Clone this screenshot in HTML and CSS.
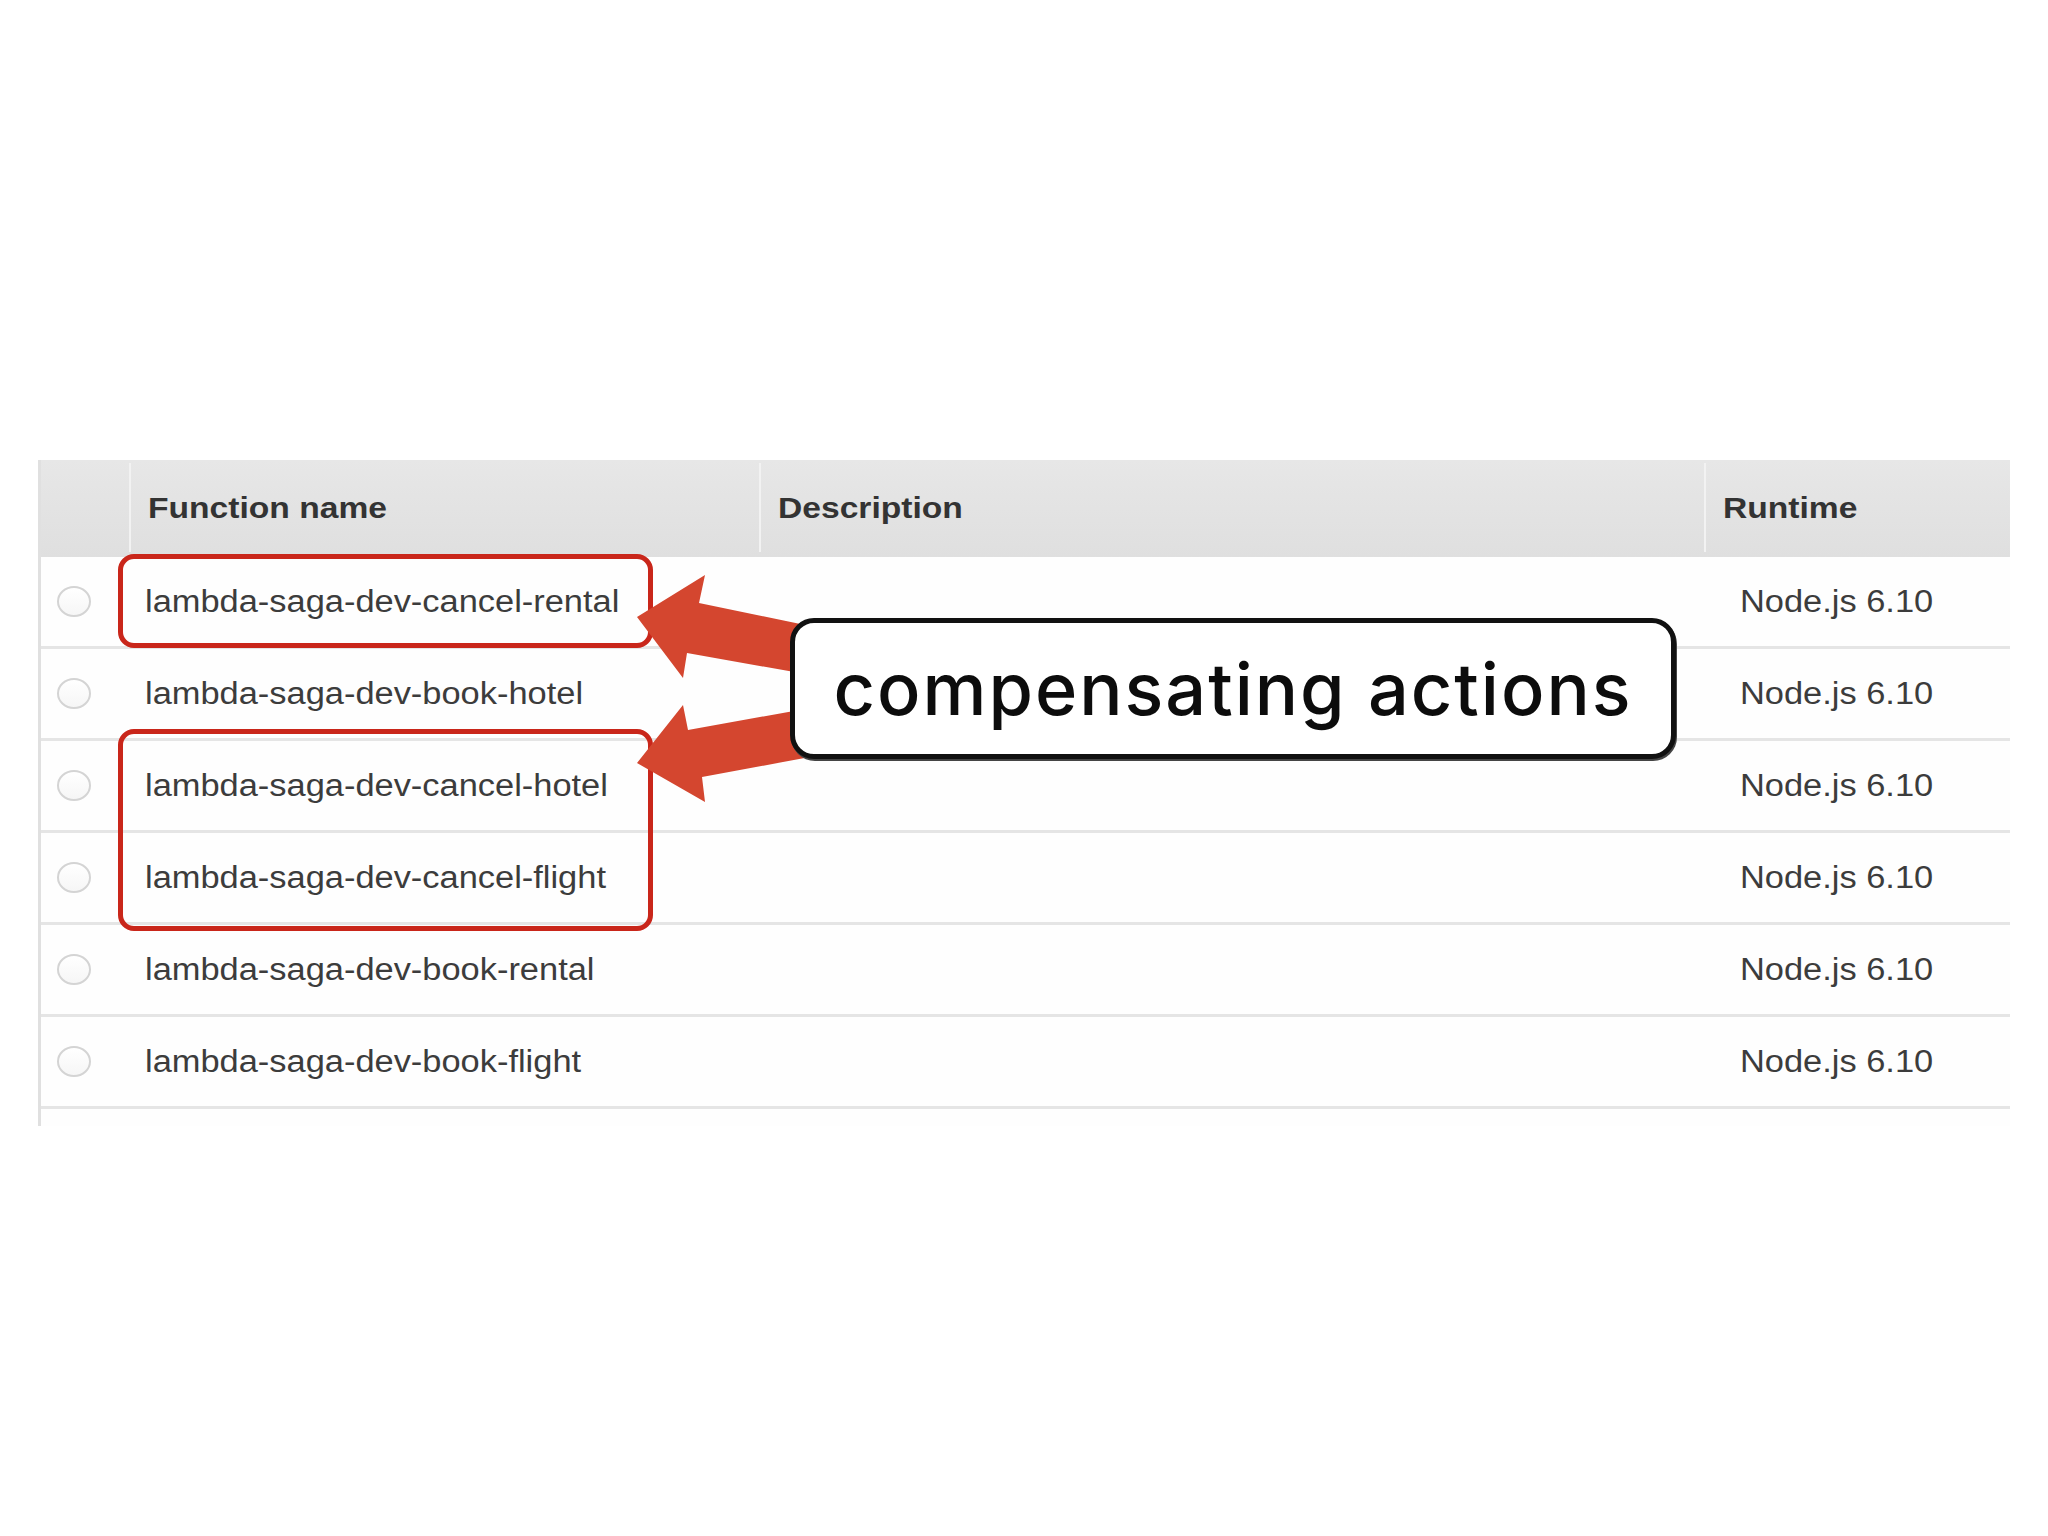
FILE: index.html
```html
<!DOCTYPE html>
<html lang="en">
<head>
<meta charset="utf-8">
<title>compensating actions</title>
<link rel="stylesheet" href="styles.css">
</head>
<body>
<div class="slide">
  <div class="table">
    <div class="thead">
      <div class="th th-check"></div>
      <div class="th"><span class="stretch">Function name</span></div>
      <div class="th"><span class="stretch">Description</span></div>
      <div class="th"><span class="stretch">Runtime</span></div>
    </div>
    <div class="row">
      <div class="cell check"><span class="radio"></span></div>
      <div class="cell name"><span class="stretch">lambda-saga-dev-cancel-rental</span></div>
      <div class="cell desc"></div>
      <div class="cell runtime"><span class="stretch">Node.js 6.10</span></div>
    </div>
    <div class="row">
      <div class="cell check"><span class="radio"></span></div>
      <div class="cell name"><span class="stretch">lambda-saga-dev-book-hotel</span></div>
      <div class="cell desc"></div>
      <div class="cell runtime"><span class="stretch">Node.js 6.10</span></div>
    </div>
    <div class="row">
      <div class="cell check"><span class="radio"></span></div>
      <div class="cell name"><span class="stretch">lambda-saga-dev-cancel-hotel</span></div>
      <div class="cell desc"></div>
      <div class="cell runtime"><span class="stretch">Node.js 6.10</span></div>
    </div>
    <div class="row">
      <div class="cell check"><span class="radio"></span></div>
      <div class="cell name"><span class="stretch">lambda-saga-dev-cancel-flight</span></div>
      <div class="cell desc"></div>
      <div class="cell runtime"><span class="stretch">Node.js 6.10</span></div>
    </div>
    <div class="row">
      <div class="cell check"><span class="radio"></span></div>
      <div class="cell name"><span class="stretch">lambda-saga-dev-book-rental</span></div>
      <div class="cell desc"></div>
      <div class="cell runtime"><span class="stretch">Node.js 6.10</span></div>
    </div>
    <div class="row">
      <div class="cell check"><span class="radio"></span></div>
      <div class="cell name"><span class="stretch">lambda-saga-dev-book-flight</span></div>
      <div class="cell desc"></div>
      <div class="cell runtime"><span class="stretch">Node.js 6.10</span></div>
    </div>
  </div>

  <div class="mark mark-one"></div>
  <div class="mark mark-two"></div>

  <svg class="arrows" width="2048" height="1536" viewBox="0 0 2048 1536" xmlns="http://www.w3.org/2000/svg">
    <polygon points="637,617 705,575 699,603 810,626 800,673 687,653 683,678" fill="#d4462f"/>
    <polygon points="637,763 683,705 688,730 805,709 810,757 702,777 705,802" fill="#d4462f"/>
  </svg>

  <div class="callout">compensating actions</div>
</div>
</body>
</html>
```

FILE: styles.css
```css
html, body {
  margin: 0;
  padding: 0;
  background: #ffffff;
}

.slide {
  position: relative;
  width: 2048px;
  height: 1536px;
  box-sizing: border-box;
  padding: 460px 0 0 38px;
  font-family: "Liberation Sans", Arial, sans-serif;
  overflow: hidden;
}

.table {
  width: 1972px;
  box-sizing: border-box;
  border-left: 3px solid #e0e0e0;
  padding-bottom: 17px;
  background: #fefefe;
}

.thead {
  display: grid;
  grid-template-columns: 88px 630px 945px 1fr;
  height: 97px;
  background: linear-gradient(#e7e7e7, #dfdfdf);
}

.th {
  display: flex;
  align-items: center;
  margin: 3px 0 5px;
  padding-left: 17px;
  border-left: 2px solid #f2f2f2;
  font-size: 30px;
  font-weight: bold;
  color: #333333;
}

.th .stretch {
  transform: scaleX(1.12);
}

.th-check {
  border-left: none;
}

.row {
  display: grid;
  grid-template-columns: 88px 630px 945px 1fr;
  height: 92px;
  box-sizing: border-box;
  border-bottom: 3px solid #e5e5e5;
}

.cell {
  display: flex;
  align-items: center;
  font-size: 31px;
  color: #3c3c3c;
}

.check {
  padding-left: 16px;
}

.radio {
  width: 30px;
  height: 27px;
  border: 2px solid #d4d4d4;
  border-radius: 50%;
  background: linear-gradient(#ffffff, #f6f6f6);
}

.name {
  padding-left: 16px;
}

.runtime {
  padding-left: 36px;
}

.stretch {
  display: inline-block;
  transform: scaleX(1.11);
  transform-origin: left center;
  white-space: nowrap;
}

.mark {
  position: absolute;
  left: 118px;
  width: 535px;
  box-sizing: border-box;
  border: 5px solid #c9261a;
  border-radius: 16px;
}

.mark-one {
  top: 554px;
  height: 94px;
}

.mark-two {
  top: 729px;
  height: 202px;
}

.arrows {
  position: absolute;
  left: 0;
  top: 0;
}

.callout {
  position: absolute;
  left: 790px;
  top: 618px;
  width: 886px;
  height: 141px;
  box-sizing: border-box;
  border: 5px solid #111111;
  border-radius: 24px;
  box-shadow: 1px 2px 0 #444444;
  background: #ffffff;
  display: flex;
  align-items: center;
  justify-content: center;
  font-family: Inter, "Noto Sans", sans-serif;
  font-weight: 500;
  font-size: 72px;
  color: #0c0c0c;
  letter-spacing: 2px;
}
```
